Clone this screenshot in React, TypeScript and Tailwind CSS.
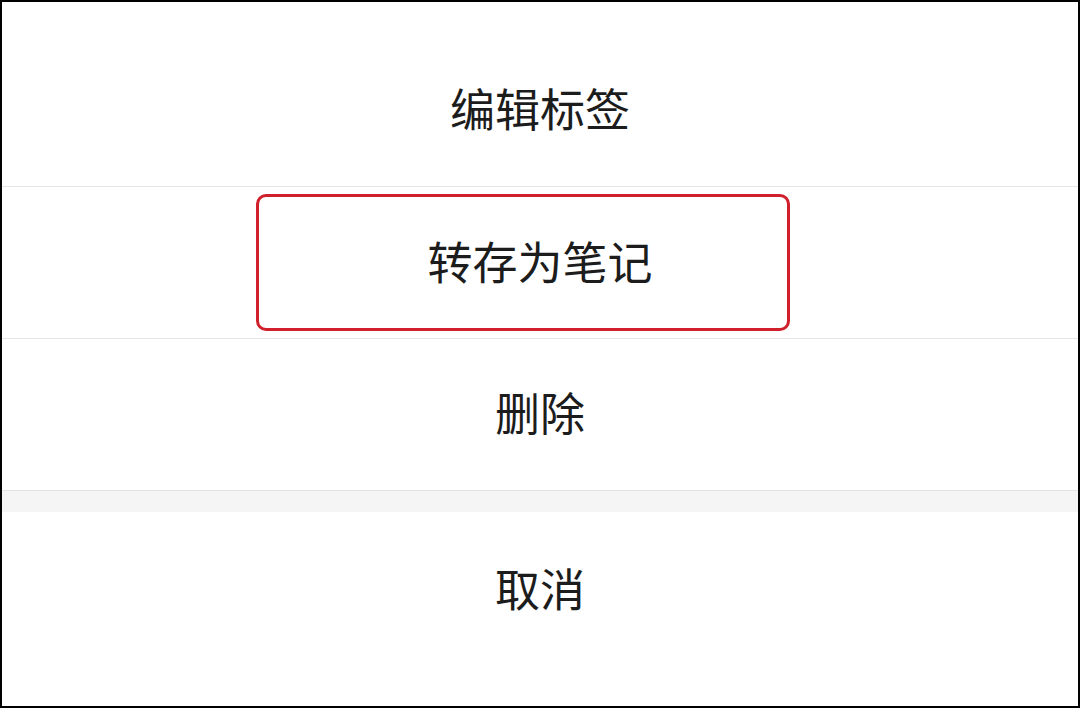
import React from "react";

const font = { fontFamily: '"Noto Sans CJK SC", "Noto Sans", sans-serif' };

export default function App() {
  return (
    <div
      className="w-[1080px] h-[708px] border-2 border-black bg-white flex flex-col text-[#1c1c1c] overflow-hidden"
      style={font}
    >
      <div className="h-[185px] shrink-0 flex items-center justify-center pt-[26px] border-b border-[#e6e6e6] text-[45px] leading-none">
        编辑标签
      </div>
      <div className="h-[152px] shrink-0 flex items-center justify-center border-b border-[#e6e6e6]">
        <div className="w-[534px] h-[137px] mr-[34px] pl-[34px] pb-[4px] border-[3px] border-[#d0202c] rounded-[10px] flex items-center justify-center text-[45px] leading-none">
          转存为笔记
        </div>
      </div>
      <div className="h-[152px] shrink-0 flex items-center justify-center pb-[6px] border-b border-[#e2e2e2] text-[45px] leading-none">
        删除
      </div>
      <div className="h-[21px] shrink-0 bg-[#f5f5f5]" />
      <div className="flex-1 flex items-center justify-center pb-[44px] text-[45px] leading-none">
        取消
      </div>
    </div>
  );
}
